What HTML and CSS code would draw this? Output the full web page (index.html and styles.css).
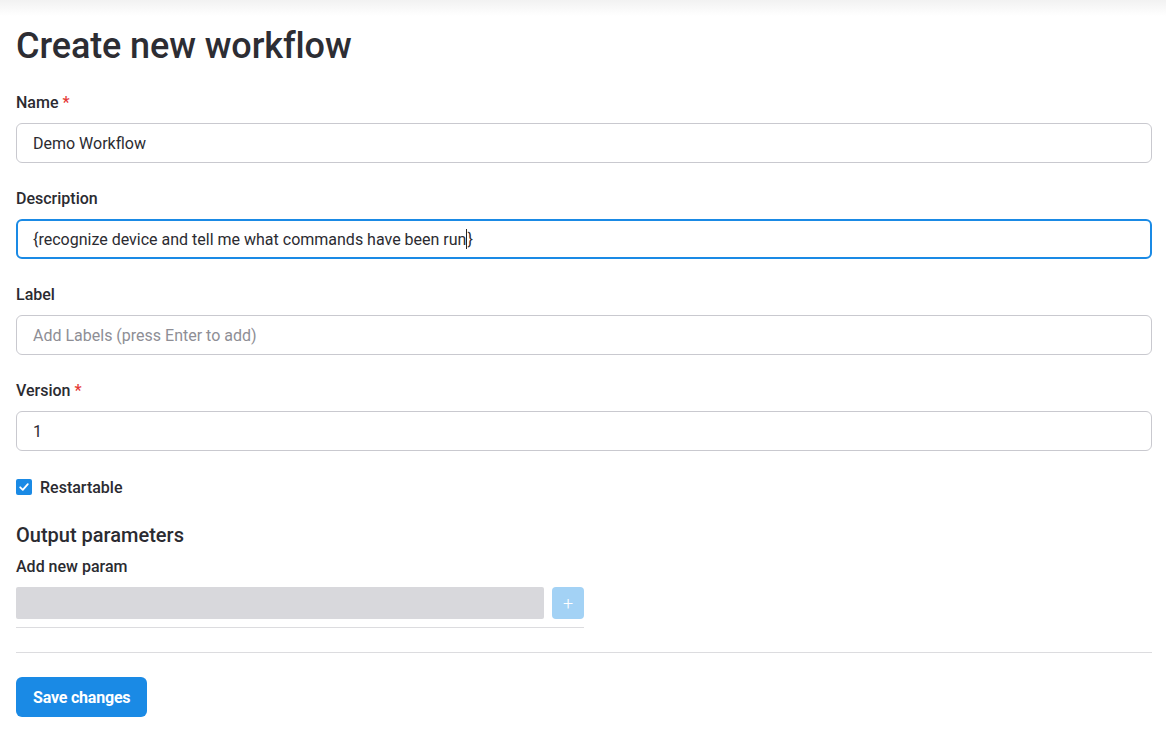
FILE: index.html
```html
<!DOCTYPE html>
<html lang="en">
<head>
<meta charset="utf-8">
<title>Create new workflow</title>
<link rel="stylesheet" href="styles.css">
</head>
<body>
<div class="top-shadow"></div>
<main class="page">
  <h1 class="title">Create new workflow</h1>
  <form class="form">
    <div class="field">
      <label class="label">Name <span class="req">*</span></label>
      <div class="input">Demo Workflow</div>
    </div>
    <div class="field">
      <label class="label">Description</label>
      <div class="input input-focus">{recognize device and tell me what commands have been run<span class="caret"></span>}</div>
    </div>
    <div class="field">
      <label class="label">Label</label>
      <div class="input placeholder">Add Labels (press Enter to add)</div>
    </div>
    <div class="field">
      <label class="label">Version <span class="req">*</span></label>
      <div class="input">1</div>
    </div>
    <div class="check-row">
      <span class="checkbox">
        <svg width="12" height="12" viewBox="0 0 12 12"><path d="M2.2 6.3 L4.8 8.8 L9.8 3.2" fill="none" stroke="#fff" stroke-width="1.8" stroke-linecap="round" stroke-linejoin="round"/></svg>
      </span>
      <span class="check-label">Restartable</span>
    </div>
    <h2 class="subtitle">Output parameters</h2>
    <div class="param-label">Add new param</div>
    <div class="param-block">
      <div class="param-row">
        <div class="param-input"></div>
        <div class="param-add">+</div>
      </div>
    </div>
    <hr class="divider">
    <button type="button" class="save">Save changes</button>
  </form>
</main>
</body>
</html>
```
FILE: styles.css
```css
* { box-sizing: border-box; }
html, body { margin: 0; background: #fff; }
body {
  font-family: Roboto, "Noto Sans", "Liberation Sans", sans-serif;
  color: #2b2b31;
}
.top-shadow {
  height: 16px;
  background: linear-gradient(to bottom, #f2f2f2, #ffffff);
}
.page {
  padding: 0 14px 0 16px;
}
.title {
  margin: 8px 0 0 0;
  font-size: 36px;
  font-weight: 500;
  line-height: 44px;
  color: #2d2d33;
  letter-spacing: -0.1px;
}
.form { margin-top: 24px; }
.field { margin-bottom: 25px; }
.label {
  display: block;
  font-size: 16px;
  font-weight: 500;
  line-height: 20px;
  padding-top: 1px;
  height: 21px;
  margin-bottom: 10px;
  color: #2b2b31;
}
.req { color: #e53935; }
.input {
  height: 40px;
  border: 1px solid #c9c9cf;
  border-radius: 6px;
  padding: 1px 16px 0 16px;
  font-size: 16px;
  line-height: 38px;
  color: #2b2b31;
}
.input-focus {
  border: 2px solid #1a8ae5;
  line-height: 36px;
  padding-left: 15px;
}
.caret {
  display: inline-block;
  width: 1px;
  height: 20px;
  background: #222;
  vertical-align: -4px;
}
.placeholder { color: #8e8e95; }
.check-row {
  display: flex;
  align-items: center;
  gap: 8px;
  height: 22px;
  margin-top: 0;
}
.checkbox {
  width: 16px;
  height: 16px;
  border-radius: 2px;
  background: #1a8ae5;
  display: flex;
  align-items: center;
  justify-content: center;
}
.check-label {
  font-size: 16px;
  font-weight: 500;
  color: #2b2b31;
}
.subtitle {
  margin: 25px 0 0 0;
  font-size: 20px;
  font-weight: 500;
  line-height: 24px;
  color: #2b2b31;
}
.param-label {
  margin-top: 10px;
  font-size: 16px;
  font-weight: 500;
  line-height: 20px;
}
.param-block {
  width: 568px;
  margin-top: 10px;
  padding-bottom: 8px;
  border-bottom: 1px solid #dcdcdf;
}
.param-row {
  display: flex;
  gap: 8px;
}
.param-input {
  flex: 1;
  height: 32px;
  background: #d8d8dc;
  border-radius: 2px;
}
.param-add {
  width: 32px;
  height: 32px;
  border-radius: 4px;
  background: #a3d2f5;
  color: #fff;
  display: flex;
  align-items: center;
  justify-content: center;
  font-size: 18px;
  font-weight: 300;
}
.divider {
  margin: 24px 0 24px 0;
  border: 0;
  border-top: 1px solid #dcdcdf;
  height: 0;
}
.save {
  height: 40px;
  padding: 0 17px;
  border: 0;
  border-radius: 6px;
  background: #1a8ae5;
  color: #fff;
  font-family: Roboto, "Noto Sans", sans-serif;
  font-size: 16px;
  font-weight: 700;
  letter-spacing: -0.2px;
  cursor: pointer;
}
```
